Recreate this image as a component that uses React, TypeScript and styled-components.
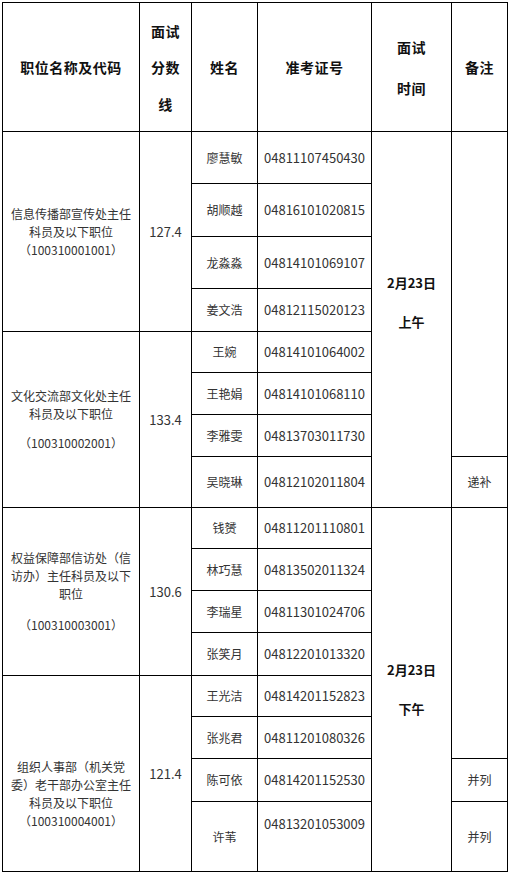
import React from "react";
import styled, { createGlobalStyle } from "styled-components";

const GlobalStyle = createGlobalStyle`
  body {
    margin: 0;
    background: #ffffff;
    font-family: "Noto Sans CJK SC", "Noto Sans", sans-serif;
  }
`;

const Wrapper = styled.div`
  padding: 2px 0 0 2px;
`;

const Table = styled.table`
  width: 505px;
  table-layout: fixed;
  border-collapse: collapse;
`;

const Cell = styled.td<{ $h?: number; $top?: boolean }>`
  border: 1px solid #000000;
  padding: 0 4px;
  height: ${(p) => (p.$h ? `${p.$h - 1}px` : "auto")};
  text-align: center;
  vertical-align: ${(p) => (p.$top ? "top" : "middle")};
  font-size: 12px;
  line-height: 18px;
  color: #333333;
`;

const HeadCell = styled(Cell).attrs({ as: "th" })`
  font-size: 14px;
  font-weight: 700;
  color: #111111;
  letter-spacing: 0.5px;
`;

const Stack = styled.div<{ $gap: number; $padTop?: number; $padBottom?: number }>`
  display: flex;
  flex-direction: column;
  align-items: center;
  gap: ${(p) => p.$gap}px;
  padding-top: ${(p) => p.$padTop ?? 0}px;
  padding-bottom: ${(p) => p.$padBottom ?? 0}px;
`;

const Score = styled.span`
  font-size: 13px;
`;

const Ticket = styled.span<{ $padTop?: number }>`
  display: block;
  font-size: 13px;
  padding-top: ${(p) => p.$padTop ?? 0}px;
`;

const TimeText = styled.span`
  font-size: 13px;
  font-weight: 700;
  color: #111111;
`;

type Person = { h: number; name: string; id: string; idTop?: number };

const people: Person[] = [
  { h: 52, name: "廖慧敏", id: "04811107450430" },
  { h: 53, name: "胡顺越", id: "04816101020815" },
  { h: 52, name: "龙淼淼", id: "04814101069107" },
  { h: 43, name: "姜文浩", id: "04812115020123" },
  { h: 41, name: "王婉", id: "04814101064002" },
  { h: 42, name: "王艳娟", id: "04814101068110" },
  { h: 42, name: "李雅雯", id: "04813703011730" },
  { h: 51, name: "吴晓琳", id: "04812102011804" },
  { h: 41, name: "钱赟", id: "04811201110801" },
  { h: 42, name: "林巧慧", id: "04813502011324" },
  { h: 42, name: "李瑞星", id: "04811301024706" },
  { h: 43, name: "张笑月", id: "04812201013320" },
  { h: 41, name: "王光洁", id: "04814201152823" },
  { h: 42, name: "张兆君", id: "04811201080326" },
  { h: 43, name: "陈可依", id: "04814201152530" },
  { h: 70, name: "许苇", id: "04813201053009", idTop: 13 },
];

type Group = {
  start: number;
  span: number;
  lines: string[];
  code: string;
  codeGap: number;
  padTop?: number;
  score: string;
};

const groups: Group[] = [
  {
    start: 0,
    span: 4,
    lines: ["信息传播部宣传处主任", "科员及以下职位"],
    code: "（100310001001）",
    codeGap: 0,
    score: "127.4",
  },
  {
    start: 4,
    span: 4,
    lines: ["文化交流部文化处主任", "科员及以下职位"],
    code: "（100310002001）",
    codeGap: 11,
    score: "133.4",
  },
  {
    start: 8,
    span: 4,
    lines: ["权益保障部信访处（信", "访办）主任科员及以下", "职位"],
    code: "（100310003001）",
    codeGap: 13,
    score: "130.6",
  },
  {
    start: 12,
    span: 4,
    lines: ["组织人事部（机关党", "委）老干部办公室主任", "科员及以下职位"],
    code: "（100310004001）",
    codeGap: 0,
    padTop: 40,
    score: "121.4",
  },
];

const times = [
  { start: 0, span: 8, date: "2月23日", half: "上午", padBottom: 35 },
  { start: 8, span: 8, date: "2月23日", half: "下午", padBottom: 0 },
];

const remarks = [
  { start: 0, span: 7, text: "" },
  { start: 7, span: 1, text: "递补" },
  { start: 8, span: 6, text: "" },
  { start: 14, span: 1, text: "并列" },
  { start: 15, span: 1, text: "并列" },
];

const App = (): React.ReactElement => {
  return (
    <Wrapper>
      <GlobalStyle />
      <Table>
        <colgroup>
          <col style={{ width: 137 }} />
          <col style={{ width: 52 }} />
          <col style={{ width: 66 }} />
          <col style={{ width: 114 }} />
          <col style={{ width: 80 }} />
          <col style={{ width: 56 }} />
        </colgroup>
        <thead>
          <tr>
            <HeadCell $h={129}>职位名称及代码</HeadCell>
            <HeadCell>
              <Stack $gap={18.5}>
                <span>面试</span>
                <span>分数</span>
                <span>线</span>
              </Stack>
            </HeadCell>
            <HeadCell>姓名</HeadCell>
            <HeadCell>准考证号</HeadCell>
            <HeadCell>
              <Stack $gap={23}>
                <span>面试</span>
                <span>时间</span>
              </Stack>
            </HeadCell>
            <HeadCell>备注</HeadCell>
          </tr>
        </thead>
        <tbody>
          {people.map((p, i) => {
            const group = groups.find((g) => g.start === i);
            const time = times.find((t) => t.start === i);
            const remark = remarks.find((r) => r.start === i);
            return (
              <tr key={p.id}>
                {group && (
                  <Cell rowSpan={group.span}>
                    <Stack $gap={0} $padTop={group.padTop}>
                      {group.lines.map((l) => (
                        <span key={l}>{l}</span>
                      ))}
                      <span style={{ marginTop: group.codeGap }}>{group.code}</span>
                    </Stack>
                  </Cell>
                )}
                {group && (
                  <Cell rowSpan={group.span}>
                    <Score>{group.score}</Score>
                  </Cell>
                )}
                <Cell $h={p.h}>{p.name}</Cell>
                <Cell $top={!!p.idTop}>
                  <Ticket $padTop={p.idTop}>{p.id}</Ticket>
                </Cell>
                {time && (
                  <Cell rowSpan={time.span}>
                    <Stack $gap={21} $padBottom={time.padBottom}>
                      <TimeText>{time.date}</TimeText>
                      <TimeText>{time.half}</TimeText>
                    </Stack>
                  </Cell>
                )}
                {remark && <Cell rowSpan={remark.span}>{remark.text}</Cell>}
              </tr>
            );
          })}
        </tbody>
      </Table>
    </Wrapper>
  );
};

export default App;
